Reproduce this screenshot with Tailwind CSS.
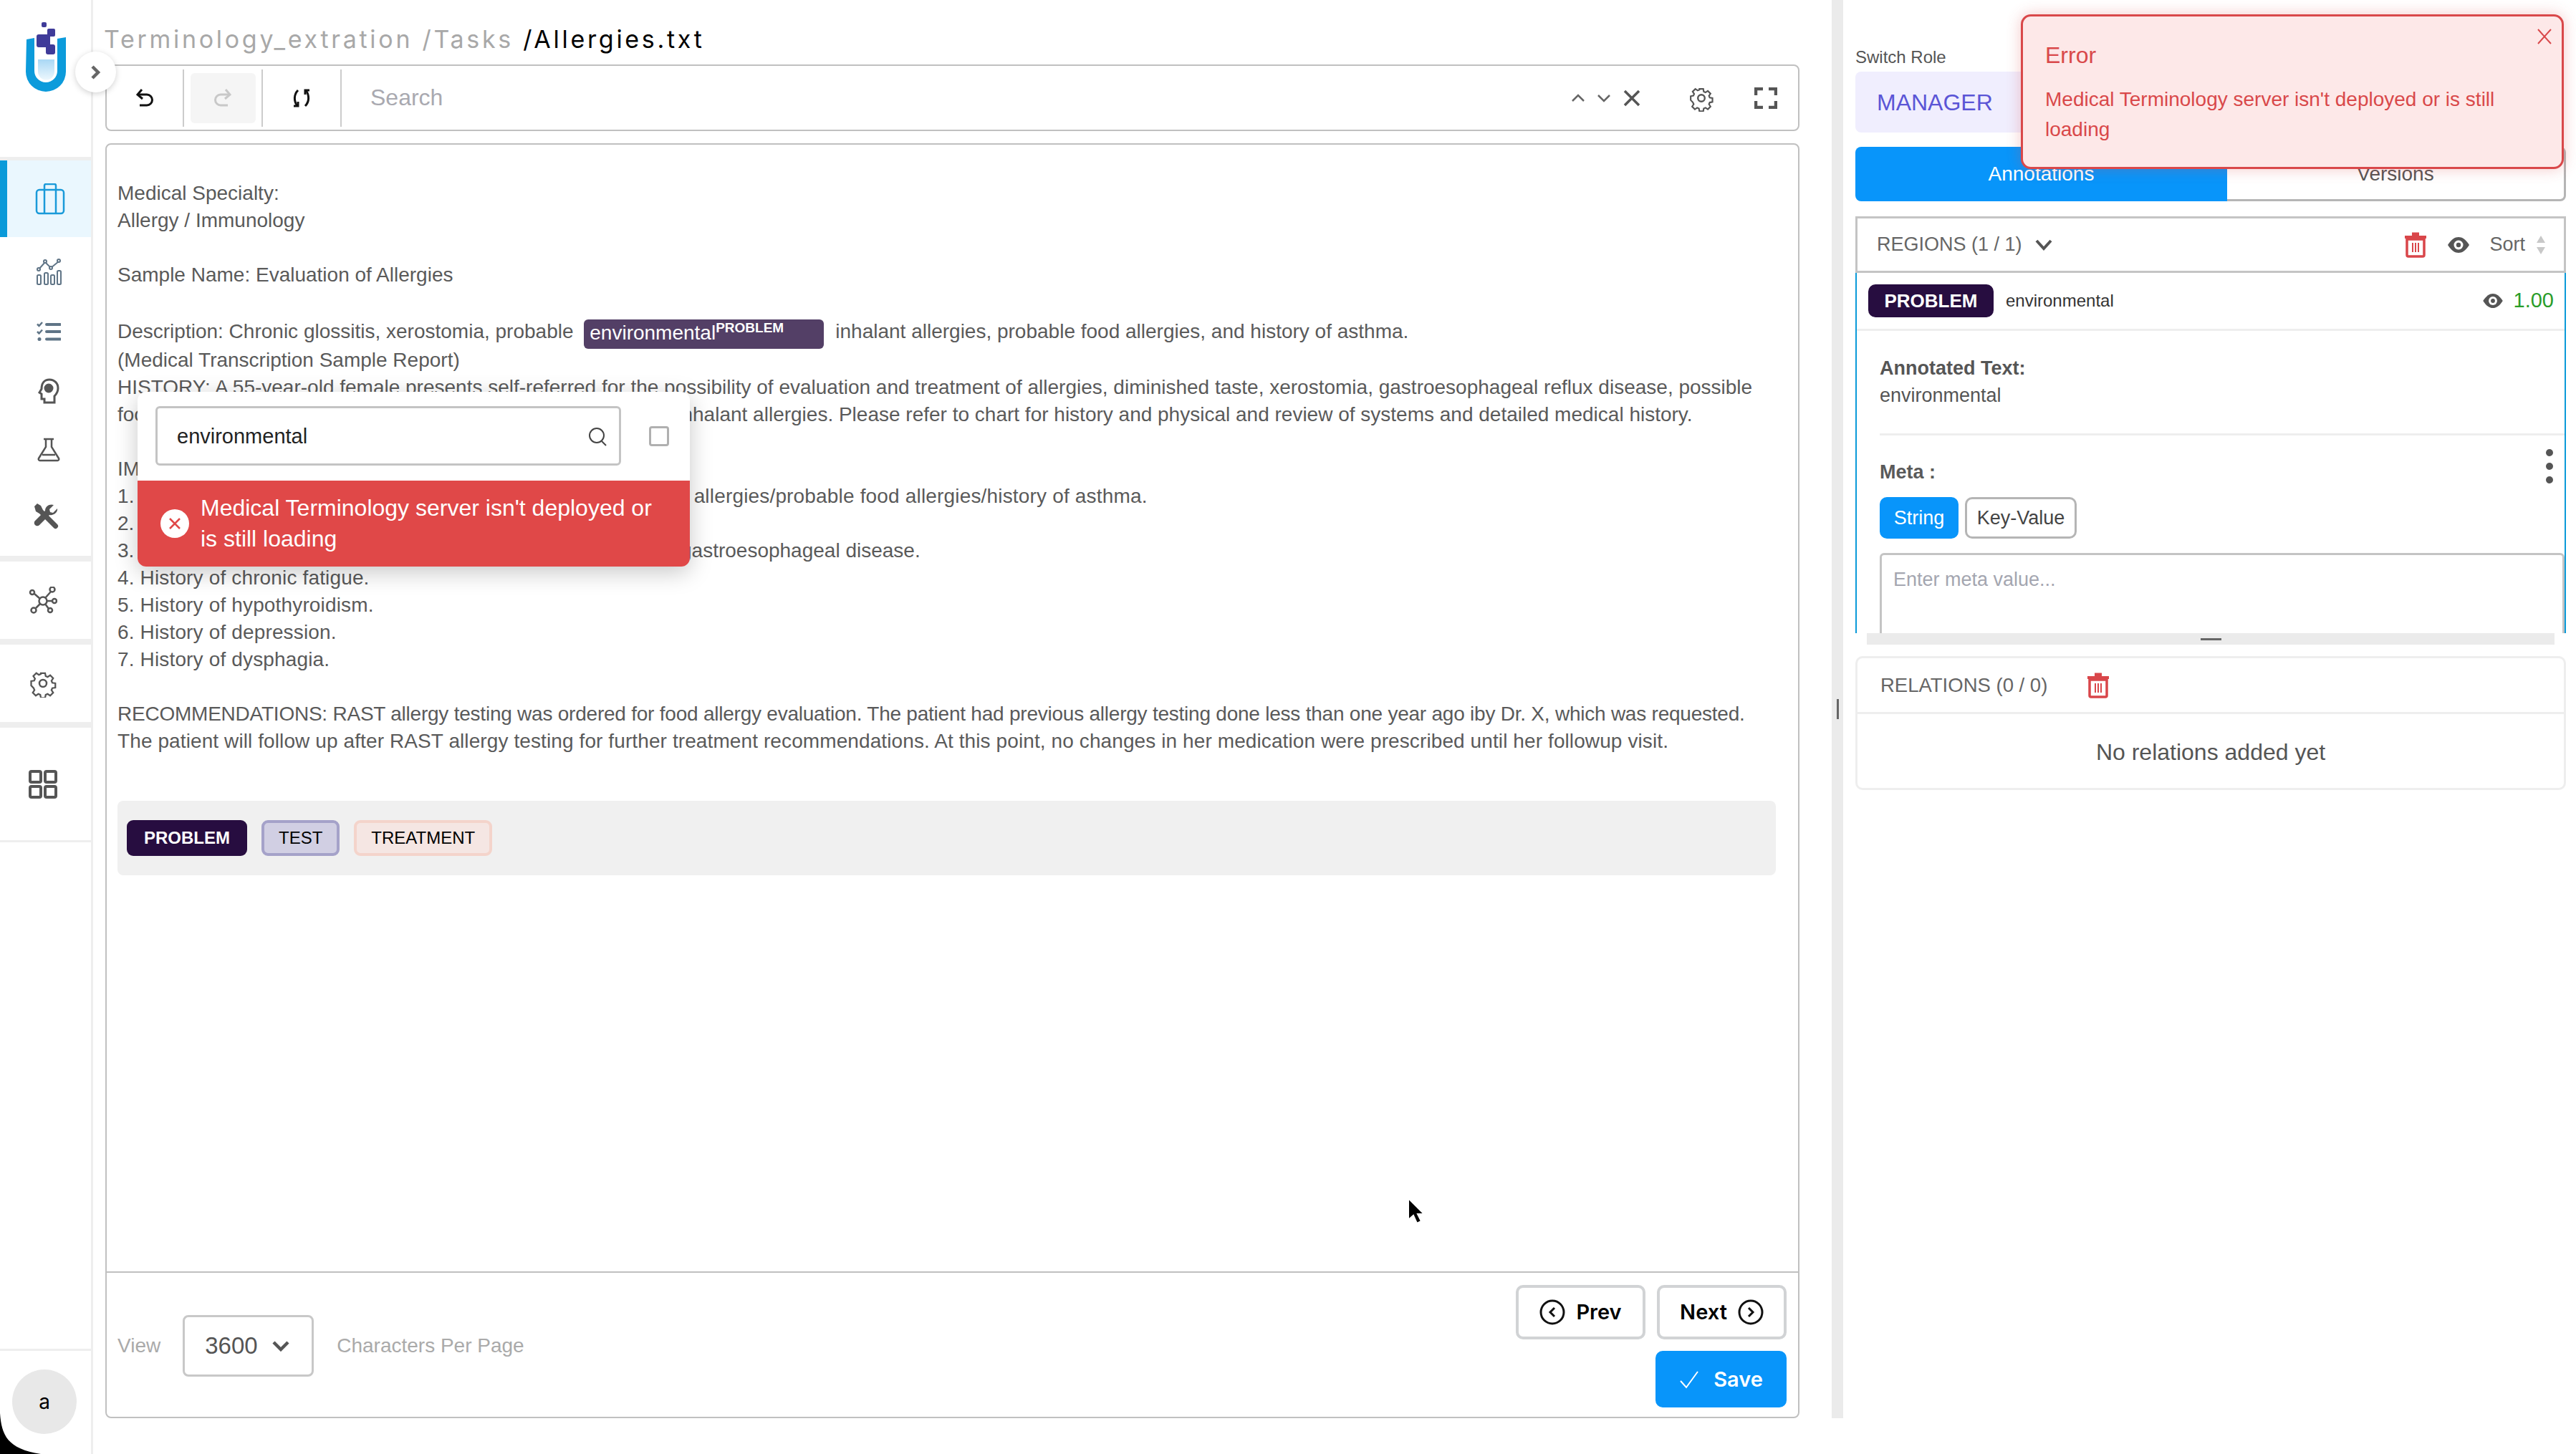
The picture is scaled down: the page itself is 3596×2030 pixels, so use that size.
<!DOCTYPE html>
<html lang="en">
<head>
<meta charset="UTF-8" />
<title>Allergies.txt</title>
<script src="https://cdn.jsdelivr.net/npm/@tailwindcss/browser@4"></script>
</head>
<body class="bg-white font-['Liberation_Sans',Arial,sans-serif] text-[#5a5a5a] overflow-hidden">
<div class="relative flex w-[3596px] h-[2030px] overflow-hidden">

  <!-- sidebar -->
  <aside class="w-[130px] h-full shrink-0 border-r-[3px] border-[#eeeeee] flex flex-col">
    <div class="h-[224px] pl-[36px] pt-[28px] border-b-[5px] border-[#eeeeee] shrink-0">
      <svg width="56" height="100" viewBox="0 0 56 100">
        <defs><linearGradient id="liq" x1="0" y1="0" x2="0" y2="1"><stop offset="0" stop-color="#a9d8f5"/><stop offset="1" stop-color="#ecf7fd"/></linearGradient></defs>
        <path d="M1 27 L12 25 V71 a16 16 0 0 0 32 0 V26 L56 24 V72 a28 28 0 0 1 -56 0 Z" fill="#0c9bdb"/>
        <path d="M17 55 H40 V72 a11.500 11.500 0 0 1 -23 0 Z" fill="url(#liq)"/>
        <rect x="22" y="3" width="7" height="7" rx="2" fill="#3f3b99"/>
        <rect x="30" y="12" width="11" height="11" rx="2" fill="#3f3b99"/>
        <rect x="15" y="20" width="19" height="18" rx="3" fill="#3f3b99"/>
        <rect x="28" y="34" width="13" height="14" rx="3" fill="#3f3b99"/>
      </svg>
    </div>
    <div class="h-[107px] shrink-0 border-l-[10px] border-[#0a9ad9] bg-[#eaf7fe] flex items-center justify-center pl-[3px]">
      <svg width="42" height="44" viewBox="0 0 42 44" fill="none" stroke="#1a9ad9" stroke-width="2.500"><rect x="2" y="9" width="38" height="33" rx="4"/><path d="M13 9V3a2 2 0 0 1 2-2h12a2 2 0 0 1 2 2v6M13 9v33M29 9v33"/></svg>
    </div>
    <div class="h-[95px] shrink-0 flex items-center justify-center pl-[9px]">
      <svg width="36" height="38" viewBox="0 0 36 38" fill="none" stroke="#5f7486" stroke-width="2"><rect x="2" y="24" width="5" height="13" rx="1.500"/><rect x="12" y="21" width="5" height="16" rx="1.500"/><rect x="21" y="24" width="5" height="13" rx="1.500"/><rect x="30" y="18" width="5" height="19" rx="1.500"/><path d="M4 16 L13 6 L21 14 L32 5"/><circle cx="4" cy="16" r="2" fill="#fff"/><circle cx="13" cy="5" r="2" fill="#fff"/><circle cx="21" cy="14" r="2" fill="#fff"/><circle cx="32" cy="4" r="2" fill="#fff"/></svg>
    </div>
    <div class="h-[74px] shrink-0 flex items-center justify-center pl-[9px]">
      <svg width="34" height="28" viewBox="0 0 34 28" fill="none" stroke="#5f7486" stroke-width="2.500"><path d="M1 3.500l2.500 2.500L8 1M1 14l2.500 2.500L8 11.500"/><circle cx="4" cy="24.500" r="2.500" fill="#5f7486" stroke="none"/><path d="M14 4h19M14 14h19M14 24.500h19" stroke-width="4" stroke-linecap="round"/></svg>
    </div>
    <div class="h-[92px] shrink-0 flex items-center justify-center pl-[9px]">
      <svg width="30" height="36" viewBox="0 0 30 36" fill="none" stroke="#555" stroke-width="3"><path d="M9 34v-5H5v-7l-3-2 3-5C5 7 9 2 16 2c7 0 12 5 12 12 0 5-2 8-5 11v9z"/><circle cx="15" cy="14" r="5" fill="#555"/></svg>
    </div>
    <div class="h-[72px] shrink-0 flex items-center justify-center pl-[9px]">
      <svg width="34" height="34" viewBox="0 0 34 34" fill="none" stroke="#555" stroke-width="2.500"><path d="M10 2h14M13 2v11L3 29a2 2 0 0 0 2 3h24a2 2 0 0 0 2-3L21 13V2"/><path d="M8 24h18" /></svg>
    </div>
    <div class="h-[112px] shrink-0 flex items-center justify-center">
      <svg width="38" height="38" viewBox="0 0 38 38" fill="#555"><path d="M3 6l4-4 5 3 3 6 20 20a3 3 0 0 1-5 5L10 16 5 13z"/><path d="M35 9l-6 6-4-1-1-4 6-6c-5-2-12 1-12 8l-14 14a4 4 0 0 0 6 6l14-14c6 1 12-4 11-9z"/></svg>
    </div>
    <div class="h-[8px] shrink-0 bg-[#eeeeee]"></div>
    <div class="h-[108px] shrink-0 flex items-center justify-center pr-[7px]">
      <svg width="40" height="38" viewBox="0 0 40 38" fill="none" stroke="#555" stroke-width="2.500"><circle cx="20" cy="20" r="5.500"/><circle cx="5" cy="8" r="3"/><circle cx="33" cy="4" r="3.500"/><circle cx="36" cy="20" r="3"/><circle cx="7" cy="33" r="3.500"/><circle cx="30" cy="33" r="3"/><path d="M8 10l8 7M31 7l-8 9M33 20h-8M10 30l6-6M28 31l-5-7"/></svg>
    </div>
    <div class="h-[8px] shrink-0 bg-[#eeeeee]"></div>
    <div class="h-[108px] shrink-0 flex items-center justify-center pr-[7px]">
      <svg width="40" height="40" viewBox="0 0 24 24" fill="none" stroke="#555" stroke-width="1.500"><circle cx="12" cy="12" r="3"/><path d="M10 2.500h4l.5 2.800 1.800.8 2.400-1.600 2.800 2.800-1.600 2.400.8 1.800 2.800.5v4l-2.800.5-.8 1.800 1.600 2.400-2.800 2.800-2.400-1.600-1.800.8-.5 2.800h-4l-.5-2.800-1.800-.8-2.400 1.600-2.800-2.800 1.600-2.400-.8-1.800L1 14v-4l2.800-.5.8-1.800L3 5.300l2.800-2.800 2.400 1.600 1.800-.8z" transform="translate(1.200 1.200) scale(.9)"/></svg>
    </div>
    <div class="h-[8px] shrink-0 bg-[#eeeeee]"></div>
    <div class="h-[160px] shrink-0 flex items-center justify-center pr-[7px] border-b-[3px] border-[#eeeeee]">
      <svg width="40" height="40" viewBox="0 0 40 40" fill="none" stroke="#555" stroke-width="4"><rect x="2" y="2" width="15" height="15" rx="2"/><rect x="23" y="2" width="15" height="15" rx="2"/><rect x="2" y="23" width="15" height="15" rx="2"/><rect x="23" y="23" width="15" height="15" rx="2"/></svg>
    </div>
    <div class="flex-1"></div>
    <div class="h-[147px] border-t-[3px] border-[#eeeeee] flex items-start pl-[17px] pt-[26px] shrink-0">
      <div class="w-[90px] h-[90px] rounded-full bg-[#e8e8e8] flex items-center justify-center text-black text-[28px] font-['Inter',sans-serif]">a</div>
    </div>
  </aside>

  <!-- main column -->
  <main class="w-[2382px] shrink-0 pl-[17px] flex flex-col">
    <div class="h-[90px] shrink-0 pt-[34px] ml-[-2px] text-[34px] leading-[42px] tracking-[3.700px] font-['Inter',sans-serif] text-[#a8a8a8] whitespace-pre">Terminology_extration /Tasks <span class="text-black">/Allergies.txt</span></div>

    <div class="h-[93px] shrink-0 border-[2px] border-[#c0c0c0] rounded-[8px] flex items-center">
      <div class="w-[108px] h-[80px] border-r-[2px] border-[#cccccc] flex items-center justify-center">
        <svg width="26" height="28" viewBox="0 0 26 28" fill="none" stroke="#111" stroke-width="3"><path d="M9 2 L3 9 L10 15"/><path d="M4 9h12a7 7 0 0 1 0 15H6"/></svg>
      </div>
      <div class="w-[110px] h-[80px] border-r-[2px] border-[#cccccc] flex items-center justify-center">
        <div class="w-[91px] h-[70px] bg-[#f5f5f5] rounded-[6px] flex items-center justify-center">
          <svg width="26" height="28" viewBox="0 0 26 28" fill="none" stroke="#c8c8c8" stroke-width="3"><path d="M17 2 L23 9 L16 15"/><path d="M22 9H10a7 7 0 0 0 0 15h10"/></svg>
        </div>
      </div>
      <div class="w-[110px] h-[80px] border-r-[2px] border-[#cccccc] flex items-center justify-center">
        <svg width="28" height="28" viewBox="0 0 28 28" fill="none" stroke="#111" stroke-width="3"><path d="M9 3C3 9 3 18 8 25M19 25c6-6 6-15 1-22"/><path d="M3 25h6v-6M25 3h-6v6"/></svg>
      </div>
      <div class="flex-1 pl-[40px] text-[32px] text-[#a9a9b0] mt-[-2px]">Search</div>
      <svg class="mr-[16px]" width="20" height="12" viewBox="0 0 20 12" fill="none" stroke="#666" stroke-width="2.500"><path d="M2 10l8-8 8 8"/></svg>
      <svg class="mr-[17px]" width="20" height="12" viewBox="0 0 20 12" fill="none" stroke="#666" stroke-width="2.500"><path d="M2 2l8 8 8-8"/></svg>
      <svg class="mr-[67px]" width="24" height="24" viewBox="0 0 24 24" fill="none" stroke="#555" stroke-width="3.500"><path d="M2 2l20 20M22 2L2 22"/></svg>
      <svg class="mr-[56px]" width="36" height="38" viewBox="0 0 24 24" fill="none" stroke="#555" stroke-width="1.600"><circle cx="12" cy="12" r="3.200"/><path d="M10 2.500h4l.5 2.800 1.800.8 2.400-1.600 2.800 2.800-1.600 2.400.8 1.800 2.800.5v4l-2.800.5-.8 1.800 1.600 2.400-2.800 2.800-2.400-1.600-1.800.8-.5 2.800h-4l-.5-2.800-1.800-.8-2.400 1.600-2.800-2.800 1.600-2.400-.8-1.800L1 14v-4l2.800-.5.8-1.800L3 5.300l2.800-2.800 2.400 1.600 1.800-.8z" transform="translate(1.200 1.200) scale(.9)"/></svg>
      <svg class="mr-[29px]" width="32" height="30" viewBox="0 0 32 30" fill="none" stroke="#555" stroke-width="4.500"><path d="M2 11V2h10M20 2h10v9M30 19v9H20M12 28H2v-9"/></svg>
    </div>

    <div class="h-[1780px] mt-[17px] shrink-0 border-[2px] border-[#c0c0c0] rounded-[8px] flex flex-col">
      <div class="h-[1573px] shrink-0 pl-[15px] pr-[31px] pt-[49px] text-[28px] leading-[38px] whitespace-nowrap">
        <div>Medical Specialty:</div>
        <div>Allergy / Immunology</div>
        <div class="h-[38px]"></div>
        <div>Sample Name: Evaluation of Allergies</div>
        <div class="h-[38px]"></div>
        <div class="flex items-center h-[43px] whitespace-pre">Description: Chronic glossitis, xerostomia, probable <span class="ml-[7px] mr-[16px] mt-[8px] w-[335px] h-[41px] bg-[#533f66] rounded-[6px] text-white pl-[8px] leading-[38px] flex items-start">environmental<span class="text-[19px] font-bold leading-[24px]">PROBLEM</span></span>inhalant allergies, probable food allergies, and history of asthma.</div>
        <div>(Medical Transcription Sample Report)</div>
        <div>HISTORY: A 55-year-old female presents self-referred for the possibility of evaluation and treatment of allergies, diminished taste, xerostomia, gastroesophageal reflux disease, possible</div>
        <div>food allergies, chronic glossitis, with a history of environmental inhalant allergies. Please refer to chart for history and physical and review of systems and detailed medical history.</div>
        <div class="h-[38px]"></div>
        <div>IMPRESSION:</div>
        <div class="tracking-[0.170px]">1. Chronic glossitis/xerostomia/probable environmental inhalant allergies/probable food allergies/history of asthma.</div>
        <div>2. Diminished taste.</div>
        <div>3. Gastroesophageal reflux disease, possible history of chronic gastroesophageal disease.</div>
        <div class="tracking-[0.150px]">4. History of chronic fatigue.</div>
        <div class="tracking-[0.150px]">5. History of hypothyroidism.</div>
        <div class="tracking-[0.150px]">6. History of depression.</div>
        <div class="tracking-[0.150px]">7. History of dysphagia.</div>
        <div class="h-[38px]"></div>
        <div class="tracking-[-0.230px]">RECOMMENDATIONS: RAST allergy testing was ordered for food allergy evaluation. The patient had previous allergy testing done less than one year ago iby Dr. X, which was requested.</div>
        <div class="tracking-[0.100px]">The patient will follow up after RAST allergy testing for further treatment recommendations. At this point, no changes in her medication were prescribed until her followup visit.</div>
        <div class="mt-[64px] h-[104px] bg-[#f0f0f0] rounded-[8px] pl-[13px] pr-[11px] pt-[27px] flex items-start gap-[20px] text-[24px] leading-none">
          <span class="h-[50px] px-[24px] rounded-[9px] bg-[#270d40] text-white font-bold flex items-center">PROBLEM</span>
          <span class="h-[50px] px-[20px] rounded-[9px] bg-[#d1cfe3] border-[4px] border-[#a5a2c9] text-black flex items-center">TEST</span>
          <span class="h-[50px] px-[20px] rounded-[9px] bg-[#f5e6e3] border-[4px] border-[#f4d4cb] text-black flex items-center">TREATMENT</span>
        </div>
      </div>
      <div class="flex-1 border-t-[2px] border-[#c0c0c0] flex pl-[15px] pr-[16px]">
        <div class="flex items-center gap-[30px] text-[28px] text-[#aaaaaa] h-[204px]">
          <span>View</span>
          <div class="ml-[1px] w-[183px] h-[86px] border-[3px] border-[#c8c8c8] rounded-[8px] flex items-center pl-[28px] gap-[20px] text-[33px] text-[#555]">3600
            <svg width="24" height="16" viewBox="0 0 24 16" fill="none" stroke="#555" stroke-width="4.500"><path d="M2 3l10 10L22 3"/></svg>
          </div>
          <span class="ml-[2px]">Characters Per Page</span>
        </div>
        <div class="ml-auto pt-[17px] flex flex-col items-end gap-[16px] font-['Inter',sans-serif] font-semibold text-[29px]">
          <div class="flex gap-[16px]">
            <div class="w-[181px] h-[76px] border-[4px] border-[#d1d3d5] rounded-[10px] flex items-center justify-center gap-[15px] text-black">
              <svg width="36" height="36" viewBox="0 0 36 36" fill="none" stroke="#111" stroke-width="3"><circle cx="18" cy="18" r="16"/><path d="M21 12l-6 6 6 6"/></svg>Prev
            </div>
            <div class="w-[181px] h-[76px] border-[4px] border-[#d1d3d5] rounded-[10px] flex items-center justify-center gap-[15px] text-black">Next
              <svg width="36" height="36" viewBox="0 0 36 36" fill="none" stroke="#111" stroke-width="3"><circle cx="18" cy="18" r="16"/><path d="M15 12l6 6-6 6"/></svg>
            </div>
          </div>
          <div class="w-[183px] h-[79px] bg-[#0895fa] rounded-[10px] flex items-center justify-center gap-[20px] text-white">
            <svg width="28" height="26" viewBox="0 0 28 26" fill="none" stroke="#fff" stroke-width="2"><path d="M2 15l8 9L26 2"/></svg>Save
          </div>
        </div>
      </div>
    </div>
  </main>

  <!-- drag strip -->
  <div class="w-[16px] h-[1980px] ml-[45px] shrink-0 bg-[#ebebeb] flex items-center justify-center">
    <div class="w-[3px] h-[28px] bg-[#666]"></div>
  </div>

  <!-- right column -->
  <section class="w-[1023px] pl-[17px] pr-[14px] shrink-0 flex flex-col">
    <div class="h-[100px] pt-[65px] text-[24px] leading-[30px] text-[#555] shrink-0">Switch Role</div>
    <div class="w-[300px] h-[85px] bg-[#f0eefe] rounded-[8px] pl-[30px] flex items-center text-[32px] text-[#5b55d6] shrink-0">MANAGER</div>
    <div class="mt-[20px] h-[76px] flex shrink-0 text-[28px]">
      <div class="w-[519px] bg-[#0895fa] text-white rounded-l-[8px] flex items-center justify-center">Annotations</div>
      <div class="flex-1 border-[3px] border-l-0 border-[#b5b5b5] rounded-r-[8px] flex items-center justify-center text-[#555]">Versions</div>
    </div>
    <div class="mt-[21px] h-[79px] border-[3px] border-[#c4c4c4] flex items-center pl-[27px] pr-[25px] text-[27px] text-[#666] shrink-0">
      REGIONS (1 / 1)
      <svg class="ml-[18px]" width="24" height="18" viewBox="0 0 24 18" fill="none" stroke="#555" stroke-width="4"><path d="M2 3l10 11L22 3"/></svg>
      <svg class="ml-auto" width="32" height="36" viewBox="0 0 32 36" fill="none" stroke="#d9464a" stroke-width="3.500"><path d="M4 10h24v22a2 2 0 0 1-2 2H6a2 2 0 0 1-2-2z"/><path d="M1 7h30" stroke-width="4"/><path d="M11 3h10" stroke-width="5"/><path d="M12 15v13M16 15v13M20 15v13" stroke-width="2"/></svg>
      <svg class="ml-[28px]" width="32" height="24" viewBox="0 0 32 24"><path d="M1 12C6 4 11 1 16 1s10 3 15 11c-5 8-10 11-15 11S6 20 1 12z" fill="#555"/><circle cx="16" cy="12" r="6.500" fill="#fff"/><circle cx="16" cy="12" r="3.200" fill="#555"/></svg>
      <span class="ml-[27px]">Sort</span>
      <svg class="ml-[15px]" width="14" height="28" viewBox="0 0 14 28"><path d="M7 1l6 10H1z" fill="#c8c8c8"/><path d="M7 27l6-10H1z" fill="#c8c8c8"/></svg>
    </div>
    <div class="h-[503px] overflow-hidden border-x-[2px] border-[#0a9ad9] shrink-0">
      <div class="h-[81px] border-b-[3px] border-[#eeeeee] flex items-center pl-[16px] pr-[15px]">
        <span class="w-[175px] h-[46px] bg-[#270d40] text-white rounded-[10px] flex items-center justify-center text-[26px] font-bold">PROBLEM</span>
        <span class="ml-[17px] text-[24px] text-[#333]">environmental</span>
        <svg class="ml-auto" width="30" height="22" viewBox="0 0 32 24"><path d="M1 12C6 4 11 1 16 1s10 3 15 11c-5 8-10 11-15 11S6 20 1 12z" fill="#555"/><circle cx="16" cy="12" r="6.500" fill="#fff"/><circle cx="16" cy="12" r="3.200" fill="#555"/></svg>
        <span class="ml-[14px] text-[29px] text-[#2a9d2a]">1.00</span>
      </div>
      <div class="pl-[32px]">
        <div class="pt-[33px] text-[27px] leading-[38px] font-bold text-[#555]">Annotated Text:</div>
        <div class="text-[27px] leading-[38px] text-[#555]">environmental</div>
        <div class="mt-[34px] h-[3px] bg-[#eeeeee]"></div>
        <div class="relative mt-[32px] h-[38px] text-[27px] leading-[38px] font-bold">Meta :
          <div class="absolute right-[16px] top-[-13px] flex flex-col gap-[9px]">
            <span class="w-[10px] h-[10px] rounded-full bg-[#555]"></span><span class="w-[10px] h-[10px] rounded-full bg-[#555]"></span><span class="w-[10px] h-[10px] rounded-full bg-[#555]"></span>
          </div>
        </div>
        <div class="mt-[16px] flex gap-[9px] text-[27px]">
          <span class="w-[110px] h-[58px] bg-[#0895fa] text-white rounded-[10px] flex items-center justify-center">String</span>
          <span class="w-[156px] h-[58px] border-[3px] border-[#b5b5b5] rounded-[10px] flex items-center justify-center text-[#444]">Key-Value</span>
        </div>
        <div class="mt-[20px] h-[130px] border-[3px] border-[#c4c4c4] rounded-[6px] pl-[16px] pt-[18px] text-[27px] leading-[32px] text-[#a4a6b0]">Enter meta value...</div>
      </div>
    </div>
    <div class="h-[16px] mx-[16px] bg-[#ebebeb] flex items-center justify-center shrink-0"><div class="w-[29px] h-[3px] bg-[#666]"></div></div>
    <div class="mt-[16px] h-[187px] border-[3px] border-[#eeeeee] rounded-[10px] shrink-0 flex flex-col">
      <div class="h-[78px] border-b-[3px] border-[#eeeeee] flex items-center pl-[32px] gap-[55px] text-[27.500px] text-[#666] shrink-0">
        RELATIONS (0 / 0)
        <svg width="32" height="36" viewBox="0 0 32 36" fill="none" stroke="#d9464a" stroke-width="3.500"><path d="M4 10h24v22a2 2 0 0 1-2 2H6a2 2 0 0 1-2-2z"/><path d="M1 7h30" stroke-width="4"/><path d="M11 3h10" stroke-width="5"/><path d="M12 15v13M16 15v13M20 15v13" stroke-width="2"/></svg>
      </div>
      <div class="flex-1 pt-[25px] text-center text-[32px] leading-[56px] text-[#555]">No relations added yet</div>
    </div>
  </section>

  <!-- collapse button -->
  <div class="absolute left-[105px] top-[72px] w-[57px] h-[57px] rounded-full bg-white shadow-[0_2px_8px_rgba(0,0,0,0.18)] flex items-center justify-center">
    <svg width="16" height="22" viewBox="0 0 16 22" fill="none" stroke="#666" stroke-width="4.500"><path d="M3 3l8 8-8 8"/></svg>
  </div>

  <!-- search popup -->
  <div class="absolute left-[192px] top-[547px] w-[771px] h-[244px] bg-white rounded-[12px] shadow-[0_8px_32px_rgba(0,0,0,0.22)] flex flex-col overflow-hidden">
    <div class="h-[124px] pl-[25px] pt-[20px] flex items-start shrink-0">
      <div class="w-[650px] h-[83px] border-[3px] border-[#c4c4c4] rounded-[6px] pl-[27px] pr-[15px] pt-[2px] flex items-center justify-between text-[29px] text-[#222]">environmental
        <svg width="28" height="28" viewBox="0 0 28 28" fill="none" stroke="#444" stroke-width="2"><circle cx="12" cy="12" r="10"/><path d="M19 20l6 6"/></svg>
      </div>
      <div class="ml-[39px] mt-[28px] w-[28px] h-[28px] border-[3px] border-[#b0b0b0] rounded-[4px]"></div>
    </div>
    <div class="flex-1 bg-[#e04848] flex items-center pl-[32px] gap-[16px] text-white text-[32px] leading-[43px]">
      <div class="w-[40px] h-[40px] rounded-full bg-white flex items-center justify-center shrink-0">
        <svg width="18" height="18" viewBox="0 0 18 18" fill="none" stroke="#e04848" stroke-width="2.500"><path d="M2 2l14 14M16 2L2 16"/></svg>
      </div>
      <div class="w-[650px]">Medical Terminology server isn't deployed or is still loading</div>
    </div>
  </div>

  <!-- error toast -->
  <div class="absolute left-[2821px] top-[20px] w-[758px] h-[216px] bg-[#fde8e8] border-[3px] border-[#d9484a] rounded-[14px] shadow-[0_0_20px_rgba(217,72,74,0.3)] pl-[31px] pt-[34px] text-[#d9484a]">
    <div class="text-[32px] leading-[40px]">Error</div>
    <div class="mt-[21px] w-[660px] text-[28px] leading-[42px]">Medical Terminology server isn't deployed or is still loading</div>
    <svg class="absolute right-[13px] top-[16px]" width="22" height="24" viewBox="0 0 22 24" fill="none" stroke="#d9484a" stroke-width="2"><path d="M2 2l18 20M20 2L2 22"/></svg>
  </div>

  <!-- mouse pointer -->
  <svg class="absolute left-[1962px] top-[1670px]" width="30" height="42" viewBox="0 0 30 42"><path d="M4 3v30l7-6 5 11 6-3-5-10h9z" fill="#000" stroke="#fff" stroke-width="2"/></svg>

  <!-- window corner -->
  <svg class="absolute left-0 bottom-0" width="57" height="57" viewBox="0 0 57 57"><path d="M0 0C2 30 10 50 57 57H0z" fill="#000"/></svg>
</div>
</body>
</html>
